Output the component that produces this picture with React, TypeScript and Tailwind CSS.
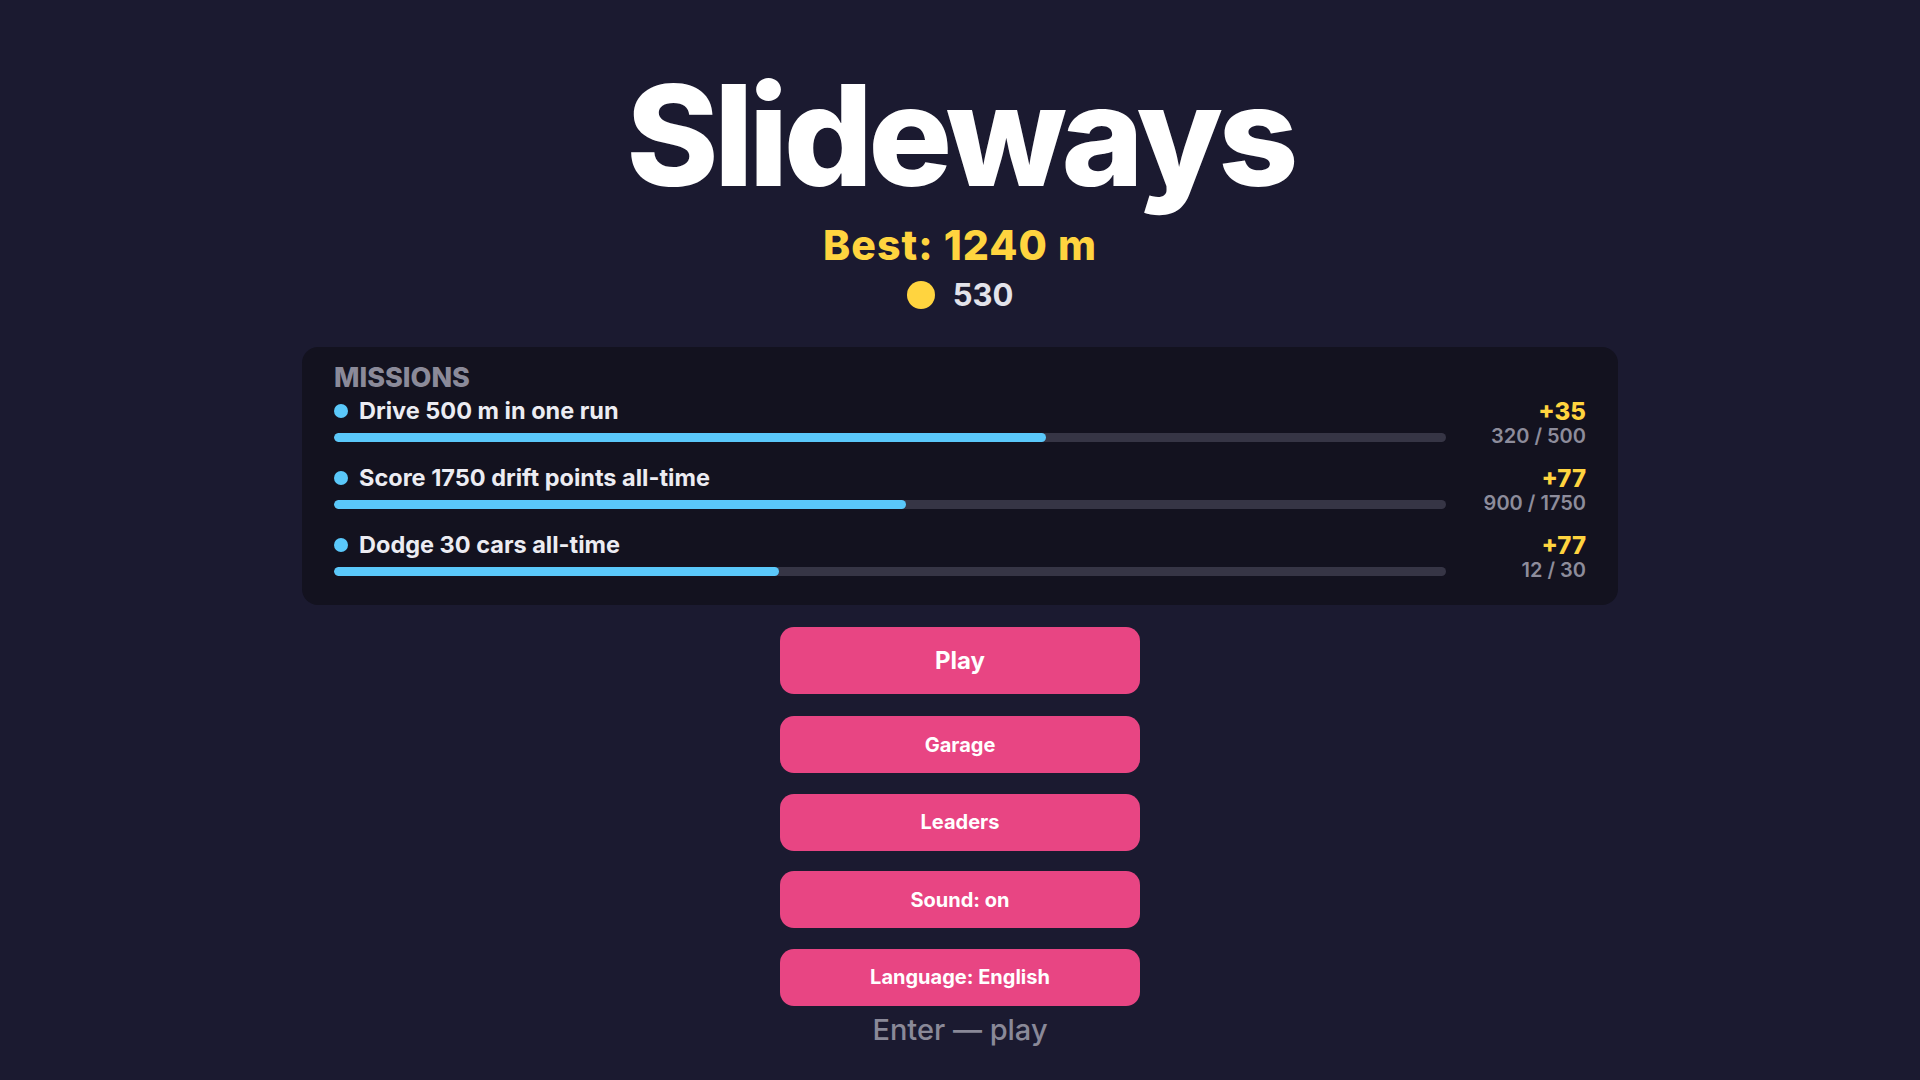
import React from 'react';

type Mission = {
    title: string;
    reward: number;
    progress: number;
    goal: number;
};

const missions: Mission[] = [
    { title: 'Drive 500 m in one run', reward: 35, progress: 320, goal: 500 },
    { title: 'Score 1750 drift points all-time', reward: 77, progress: 900, goal: 1750 },
    { title: 'Dodge 30 cars all-time', reward: 77, progress: 12, goal: 30 },
];

const menuItems = ['Garage', 'Leaders', 'Sound: on', 'Language: English'];

function MissionRow({ mission }: { mission: Mission }) {
    const pct = Math.min(100, (mission.progress / mission.goal) * 100);
    return (
        <div className="flex items-start gap-[20px]">
            <div className="flex-1 flex flex-col">
                <div className="flex items-center gap-[11px] h-[28px]">
                    <span className="w-[14px] h-[14px] rounded-full bg-[#5ac8fa] shrink-0" />
                    <span className="text-[23.5px] leading-[28px] font-bold text-[#ececf2]">{mission.title}</span>
                </div>
                <div className="mt-[8px] h-[9px] rounded-full bg-[#363545] overflow-hidden">
                    <div className="h-full rounded-full bg-[#5ac8fa]" style={{ width: `${pct}%` }} />
                </div>
            </div>
            <div className="w-[120px] mt-[2px] flex flex-col items-end">
                <span className="text-[24px] leading-[25px] font-extrabold text-[#ffd43f]">+{mission.reward}</span>
                <span className="text-[20px] leading-[25px] font-semibold text-[#8d8c9b]">
                    {mission.progress} / {mission.goal}
                </span>
            </div>
        </div>
    );
}

export default function App() {
    return (
        <div
            className="min-h-screen w-full bg-[#1b1a30] flex flex-col items-center pt-[50px]"
            style={{ fontFamily: 'Inter, "Noto Sans", "Liberation Sans", sans-serif' }}
        >
            {/* title + best score */}
            <h1 className="text-[140px] leading-[170px] font-extrabold tracking-[-0.034em] text-white">Slideways</h1>
            <div className="mt-[5px] text-[41px] leading-[40px] font-extrabold text-[#ffd43f] tracking-[0.025em]">
                Best: 1240 m
            </div>
            <div className="mt-[12px] flex items-center gap-[18px] h-[36px]">
                <span className="w-[28px] h-[28px] rounded-full bg-[#ffd43f]" />
                <span className="text-[31px] leading-[36px] font-bold text-[#e3e3ea]">530</span>
            </div>

            {/* missions panel */}
            <div className="mt-[34px] w-[1316px] rounded-[16px] bg-[#13121f] px-[32px] pt-[16px] pb-[22px]">
                <div className="text-[27px] leading-[30px] font-extrabold text-[#8b8a99]">MISSIONS</div>
                <div className="mt-[4px] flex flex-col gap-[15px]">
                    {missions.map((m) => (
                        <MissionRow key={m.title} mission={m} />
                    ))}
                </div>
            </div>

            {/* menu */}
            <div className="mt-[22px] w-[360px] flex flex-col">
                <button className="h-[67px] rounded-[14px] bg-[#e84583] text-white text-[24px] font-bold">
                    Play
                </button>
                <div className="mt-[22px] flex flex-col gap-[20.5px]">
                    {menuItems.map((label) => (
                        <button
                            key={label}
                            className="h-[57px] rounded-[14px] bg-[#e84583] text-white text-[20px] font-bold"
                        >
                            {label}
                        </button>
                    ))}
                </div>
            </div>
            <div className="mt-[6px] text-[29px] leading-[36px] font-medium text-[#8a8998]">Enter — play</div>
        </div>
    );
}
